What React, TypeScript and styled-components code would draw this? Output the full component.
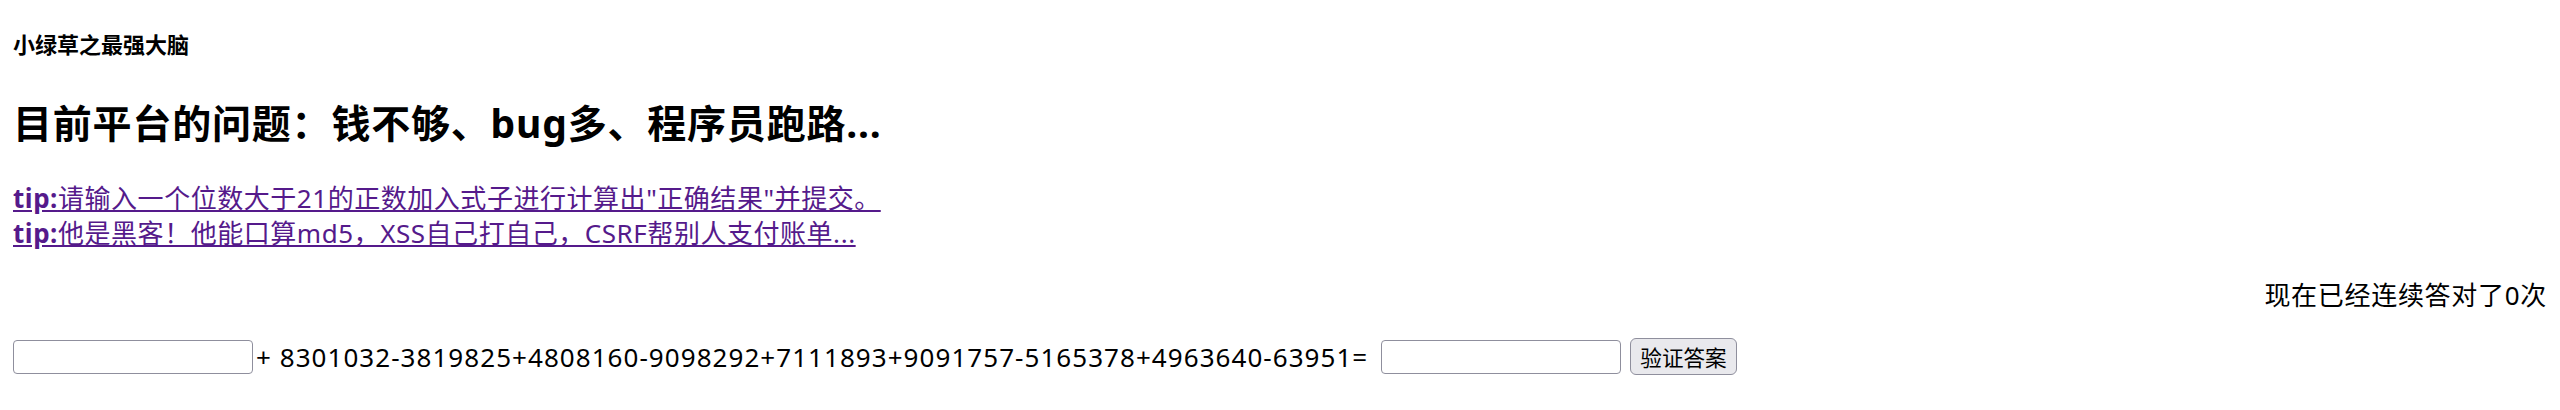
import styled, { createGlobalStyle } from "styled-components";

const Global = createGlobalStyle`
body{
    margin:0;
    background:#fff;
    color:#000;
    font-family: "Noto Sans", "Noto Sans CJK SC", sans-serif;
    font-size:26px;
}
`;

const Page = styled.div`
padding:0 13px;
`;

const Brand = styled.h5`
margin:30px 0 0;
font-size:22px;
line-height:28px;
font-weight:bold;
`;

const Headline = styled.h2`
margin:39px 0 0;
font-size:39px;
line-height:52px;
font-weight:bold;
letter-spacing:0.8px;
`;

const Tips = styled.div`
margin-top:32px;
display:flex;
flex-direction:column;
align-items:flex-start;
`;

const Tip = styled.a`
color:#551a8b;
text-decoration:underline;
line-height:35px;
letter-spacing:0.54px;
b{
    font-weight:bold;
}
`;

const Streak = styled.p`
margin:27px 0 0;
line-height:34px;
text-align:right;
letter-spacing:0.7px;
`;

const Row = styled.form`
margin-top:26px;
display:flex;
align-items:center;
height:37px;
`;

const Field = styled.input`
box-sizing:border-box;
width:240px;
height:34px;
margin:0;
border:1.6px solid #8f8f9d;
border-radius:4px;
background:#fff;
font-size:21.6px;
`;

const Formula = styled.span`
line-height:34px;
margin:0 13px 0 3px;
letter-spacing:1.05px;
`;

const Submit = styled.button`
box-sizing:border-box;
margin-left:9px;
height:37px;
padding:0 9px;
border:1.6px solid #8f8f9d;
border-radius:6px;
background:#e9e9ed;
color:#000;
font-family:"Noto Sans CJK SC", sans-serif;
font-size:21.6px;
line-height:30px;
`;

const tips = [
    "请输入一个位数大于21的正数加入式子进行计算出\"正确结果\"并提交。",
    "他是黑客！他能口算md5，XSS自己打自己，CSRF帮别人支付账单...",
];

function App() {
    return (
        <Page>
            <Global />
            <Brand>小绿草之最强大脑</Brand>
            <Headline>目前平台的问题：钱不够、bug多、程序员跑路...</Headline>
            <Tips>
                {tips.map((t) => (
                    <Tip key={t} href="#"><b>tip:</b>{t}</Tip>
                ))}
            </Tips>
            <Streak>现在已经连续答对了0次</Streak>
            <Row onSubmit={(e) => e.preventDefault()}>
                <Field type="text" />
                <Formula>+ 8301032-3819825+4808160-9098292+7111893+9091757-5165378+4963640-63951=</Formula>
                <Field type="text" />
                <Submit type="submit">验证答案</Submit>
            </Row>
        </Page>
    );
}

export default App;
